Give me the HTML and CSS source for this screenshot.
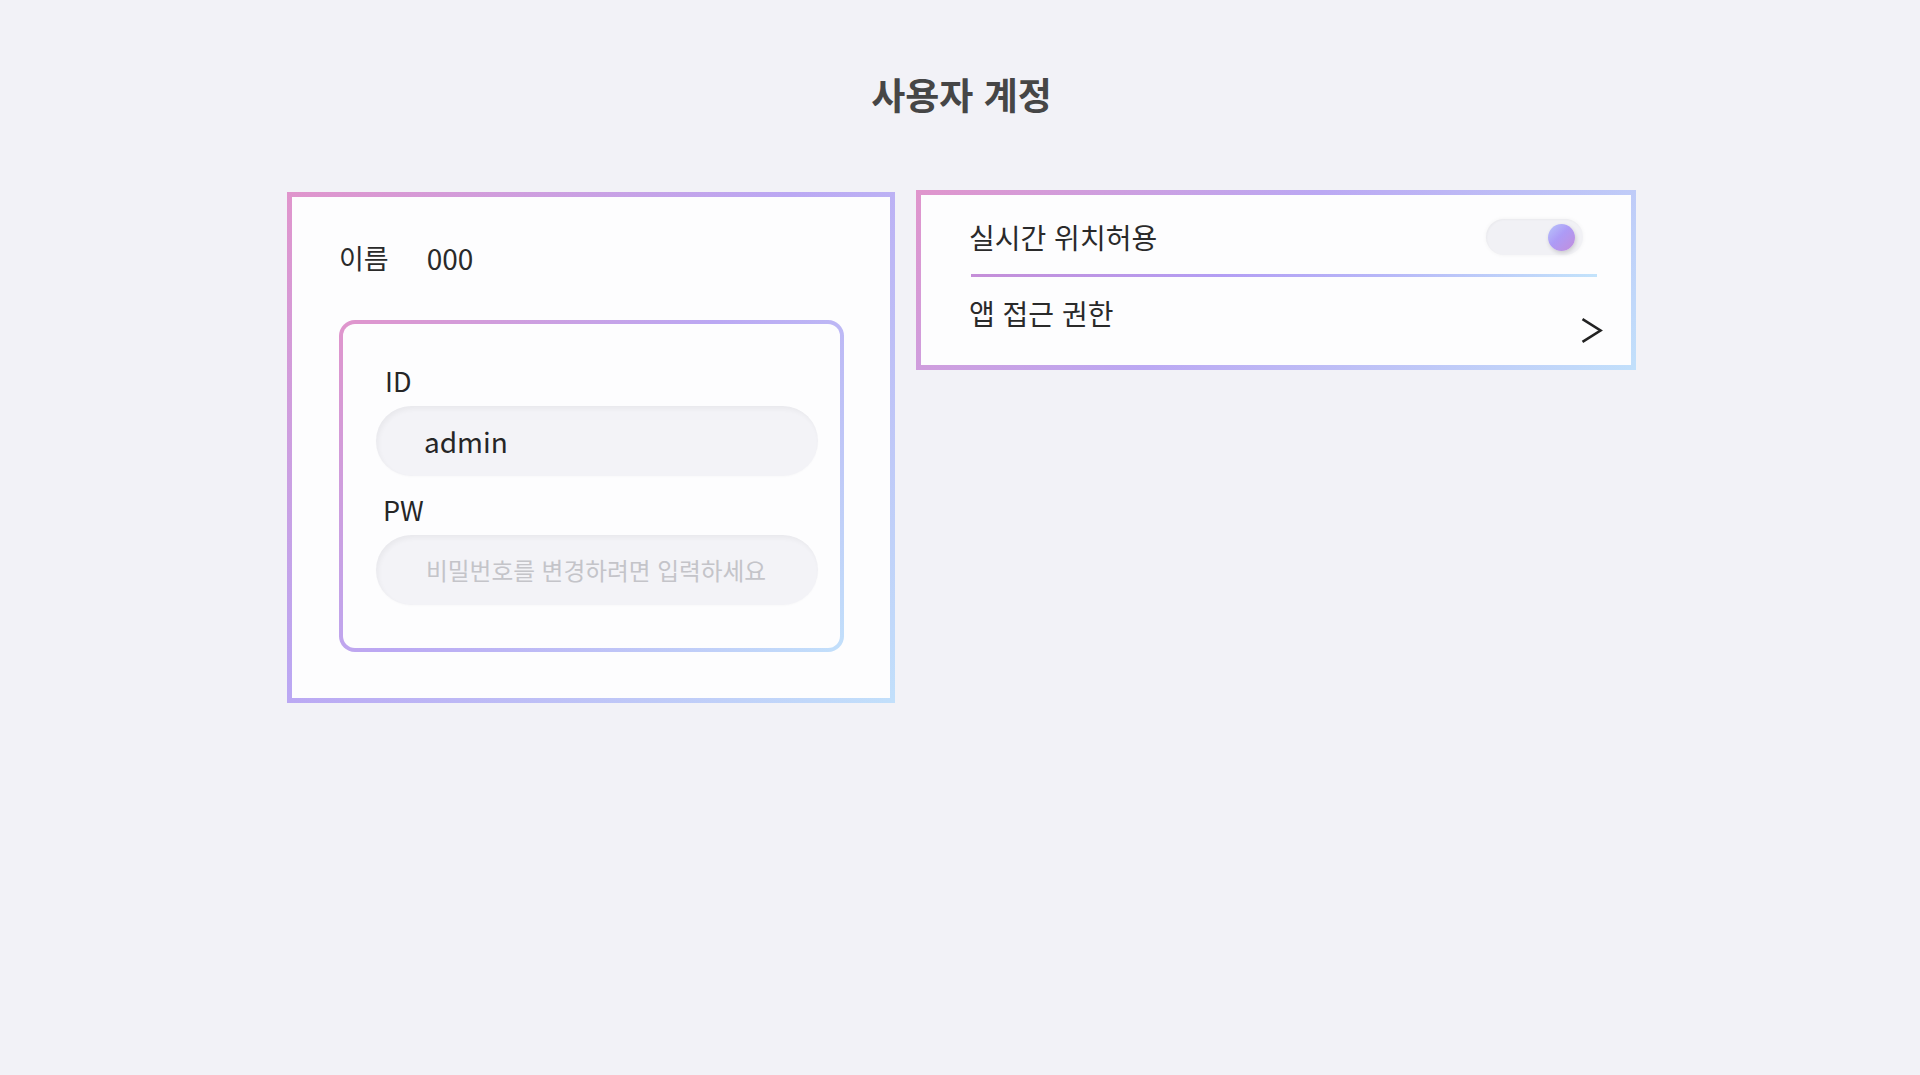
FILE: index.html
```html
<!DOCTYPE html>
<html lang="ko">
<head>
<meta charset="utf-8">
<title>사용자 계정</title>
<link rel="stylesheet" href="styles.css">
</head>
<body>
<h1 class="page-title">사용자 계정</h1>
<main class="cards">
  <section class="card card-account">
    <div class="name-row">
      <span class="name-label">이름</span>
      <span class="name-value">000</span>
    </div>
    <div class="login-box">
      <label class="field-label" for="uid">ID</label>
      <input class="field-input" id="uid" type="text" value="admin">
      <label class="field-label field-label-pw" for="upw">PW</label>
      <input class="field-input field-input-pw" id="upw" type="password" placeholder="비밀번호를 변경하려면 입력하세요">
    </div>
  </section>
  <section class="card card-settings">
    <div class="setting-row">
      <span class="setting-label">실시간 위치허용</span>
      <span class="toggle"><span class="toggle-knob"></span></span>
    </div>
    <div class="divider"></div>
    <div class="setting-row setting-row-link">
      <span class="setting-label">앱 접근 권한</span>
      <svg class="chevron" width="22" height="25" viewBox="0 0 22 25" aria-hidden="true">
        <polyline points="1.5,1.2 19.5,12.5 1.5,23.8" fill="none" stroke="#222" stroke-width="2.6" stroke-linejoin="miter"/>
      </svg>
    </div>
  </section>
</main>
</body>
</html>
```

FILE: styles.css
```css
* {
  box-sizing: border-box;
}

html, body {
  margin: 0;
  padding: 0;
}

body {
  background: #f2f2f7;
  font-family: "Noto Sans CJK KR", "Noto Sans", sans-serif;
  color: #262626;
  min-height: 1075px;
}

.page-title {
  margin: 69px 0 0;
  padding-left: 3px;
  text-align: center;
  font-size: 37px;
  line-height: 50px;
  font-weight: 700;
  color: #464646;
}

.cards {
  display: flex;
  justify-content: center;
  align-items: flex-start;
  gap: 21px;
  margin-top: 71px;
  padding-left: 3px;
}

.card {
  border: 5px solid transparent;
  background:
    linear-gradient(#fdfdfe, #fdfdfe) padding-box,
    linear-gradient(135deg, #e095cc 0%, #bba8f3 45%, #c2e0fb 100%) border-box;
}

/* left card */
.card-account {
  width: 608px;
  margin-top: 2px;
  padding: 43px 46px 46px 47px;
}

.name-row {
  display: flex;
  align-items: center;
  font-size: 27px;
  line-height: 36px;
  color: #2a2a2a;
}

.name-label {
  margin-right: 38px;
}

.name-value {
  font-size: 28px;
}

.login-box {
  margin-top: 44px;
  border: 4px solid transparent;
  border-radius: 16px;
  padding: 39px 0 43px 33px;
  display: flex;
  flex-direction: column;
  align-items: flex-start;
  background:
    linear-gradient(#fdfdfe, #fdfdfe) padding-box,
    linear-gradient(135deg, #e095cc 0%, #bba8f3 45%, #c2e0fb 100%) border-box;
}

.field-label {
  display: block;
  padding-left: 9px;
  font-size: 27px;
  line-height: 36px;
  color: #262626;
  margin-bottom: 7px;
}

.field-label-pw {
  padding-left: 7px;
}

.field-input {
  display: block;
  width: 442px;
  height: 70px;
  border: none;
  outline: none;
  border-radius: 35px;
  background: #f3f3f7;
  padding: 0 20px 0 48px;
  font-family: "Noto Sans CJK KR", "Noto Sans", sans-serif;
  font-size: 28px;
  color: #262626;
  box-shadow:
    inset 2px 3px 5px rgba(0, 0, 0, 0.045),
    0 1px 2px rgba(0, 0, 0, 0.02);
  margin-bottom: 16px;
}

.field-input-pw {
  margin-bottom: 0;
  font-size: 23.7px;
  padding-left: 50px;
}

.field-input::placeholder {
  color: #c4c4c9;
  font-size: 23.7px;
}

/* right card */
.card-settings {
  width: 720px;
}

.setting-row {
  display: flex;
  align-items: center;
  justify-content: space-between;
  padding: 24px 48px 19px 48px;
}

.setting-label {
  font-size: 28px;
  line-height: 36px;
  color: #2a2a2a;
}

.toggle {
  display: flex;
  align-items: center;
  justify-content: flex-end;
  width: 97px;
  height: 36px;
  border-radius: 18px;
  background: #f1f1f5;
  padding-right: 8px;
  box-shadow:
    0 0 4px rgba(0, 0, 0, 0.05),
    inset 1px 1px 2px rgba(0, 0, 0, 0.03);
}

.toggle-knob {
  width: 27px;
  height: 27px;
  border-radius: 50%;
  background: linear-gradient(135deg, #b9c6fb 0%, #ad9bf6 45%, #c38ddb 100%);
  box-shadow: 1px 2px 4px rgba(0, 0, 0, 0.16);
}

.divider {
  height: 3px;
  margin: 0 34px 0 50px;
  background: linear-gradient(90deg, #c58ed8 0%, #b39ef4 40%, #b7b6f8 65%, #c3e3fb 100%);
}

.setting-row-link {
  align-items: flex-start;
  padding: 18px 28px 22px 48px;
}

.chevron {
  display: block;
  margin-top: 23px;
}
```
